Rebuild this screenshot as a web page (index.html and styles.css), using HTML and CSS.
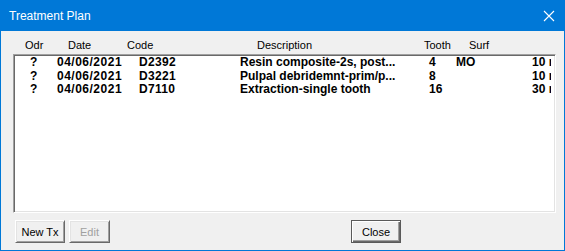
FILE: index.html
```html
<!doctype html>
<html lang="en">
<head>
    <meta charset="utf-8">
    <title>Treatment Plan</title>
    <link rel="stylesheet" href="styles.css">
</head>
<body>
<div class="window">
    <div class="titlebar">
        <span class="title">Treatment Plan</span>
        <svg class="close-x" width="12" height="12" viewBox="0 0 12 12">
            <path d="M1 1 L11 11 M11 1 L1 11" stroke="#ffffff" stroke-width="1.1" fill="none"/>
        </svg>
    </div>

    <div class="content">
        <div class="headers">
            <span class="h-odr">Odr</span>
            <span class="h-date">Date</span>
            <span class="h-code">Code</span>
            <span class="h-desc">Description</span>
            <span class="h-tooth">Tooth</span>
            <span class="h-surf">Surf</span>
        </div>

        <div class="listbox">
            <div class="row">
                <span class="c-odr">?</span>
                <span class="c-date">04/06/2021</span>
                <span class="c-code">D2392</span>
                <span class="c-desc">Resin composite-2s, post...</span>
                <span class="c-tooth">4</span>
                <span class="c-surf">MO</span>
                <span class="c-time">10 min</span>
            </div>
            <div class="row">
                <span class="c-odr">?</span>
                <span class="c-date">04/06/2021</span>
                <span class="c-code">D3221</span>
                <span class="c-desc">Pulpal debridemnt-prim/p...</span>
                <span class="c-tooth">8</span>
                <span class="c-surf"></span>
                <span class="c-time">10 min</span>
            </div>
            <div class="row">
                <span class="c-odr">?</span>
                <span class="c-date">04/06/2021</span>
                <span class="c-code">D7110</span>
                <span class="c-desc">Extraction-single tooth</span>
                <span class="c-tooth">16</span>
                <span class="c-surf"></span>
                <span class="c-time">30 min</span>
            </div>
        </div>

        <div class="buttons">
            <button type="button" class="btn btn-new">New Tx</button>
            <button type="button" class="btn btn-edit" disabled>Edit</button>
            <button type="button" class="btn btn-close">Close</button>
        </div>
    </div>
</div>
</body>
</html>
```

FILE: styles.css
```css
body {
    margin: 0;
    padding: 0;
    background: #f0f0f0;
    font-family: "Liberation Sans", Arial, sans-serif;
}

.window {
    width: 565px;
    height: 251px;
    box-sizing: border-box;
    border: 1px solid #0078d7;
    border-top: none;
    background: #f0f0f0;
    display: flex;
    flex-direction: column;
}

.titlebar {
    height: 31px;
    margin: 0 -1px;
    background: #0078d7;
    display: flex;
    align-items: center;
    justify-content: space-between;
    padding: 0 10px 0 9px;
    box-sizing: border-box;
}

.title {
    color: #ffffff;
    font-size: 12px;
    line-height: 16px;
}

.close-x {
    display: block;
}

.content {
    flex: 1;
    display: flex;
    flex-direction: column;
    padding: 0 8px 0 12px;
}

/* column headers */
.headers {
    margin-top: 8px;
    height: 13px;
    font-size: 11px;
    line-height: 13px;
    color: #000000;
    display: flex;
    white-space: nowrap;
}

.h-odr { margin-left: 12px; width: 43px; }
.h-date { width: 59px; }
.h-code { width: 130px; }
.h-desc { width: 167px; }
.h-tooth { width: 45px; }

/* sunken list */
.listbox {
    margin-top: 2px;
    height: 159px;
    box-sizing: border-box;
    background: #ffffff;
    border-top: 1px solid #a0a0a0;
    border-left: 1px solid #a0a0a0;
    border-right: 1px solid #ffffff;
    border-bottom: 1px solid #ffffff;
    box-shadow: inset 1px 1px 0 #696969, inset -1px -1px 0 #e3e3e3;
    padding: 1px 4px 0 1px;
    overflow: hidden;
}

.row {
    display: flex;
    font-size: 12px;
    font-weight: bold;
    line-height: 13.5px;
    color: #000000;
    white-space: nowrap;
}

.c-odr { margin-left: 15px; width: 27px; }
.c-date { width: 82px; letter-spacing: 0.5px; }
.c-code { width: 101px; letter-spacing: 0.3px; }
.c-desc { width: 189px; }
.c-tooth { width: 27px; }
.c-surf { width: 76px; }
.c-time { flex: 1; overflow: hidden; }

/* buttons */
.buttons {
    margin-top: 7px;
    display: flex;
    padding-left: 2px;
}

.btn {
    height: 23px;
    box-sizing: border-box;
    padding: 0;
    font-family: "Liberation Sans", Arial, sans-serif;
    font-size: 11px;
    color: #000000;
    background: #f0f0f0;
    border-top: 1px solid #ffffff;
    border-left: 1px solid #ffffff;
    border-right: 1px solid #696969;
    border-bottom: 1px solid #696969;
    box-shadow: inset 1px 1px 0 #e3e3e3, inset -1px -1px 0 #a0a0a0;
}

.btn-new { width: 50px; }

.btn-edit {
    width: 41px;
    margin-left: 4px;
    color: #a0a0a0;
}

.btn-close {
    width: 50px;
    margin-left: 241px;
    border: 1px solid #5a5a5a;
    box-shadow: inset 1px 1px 0 #ffffff, inset -1px -1px 0 #696969, inset -2px -2px 0 #a0a0a0;
}
```
